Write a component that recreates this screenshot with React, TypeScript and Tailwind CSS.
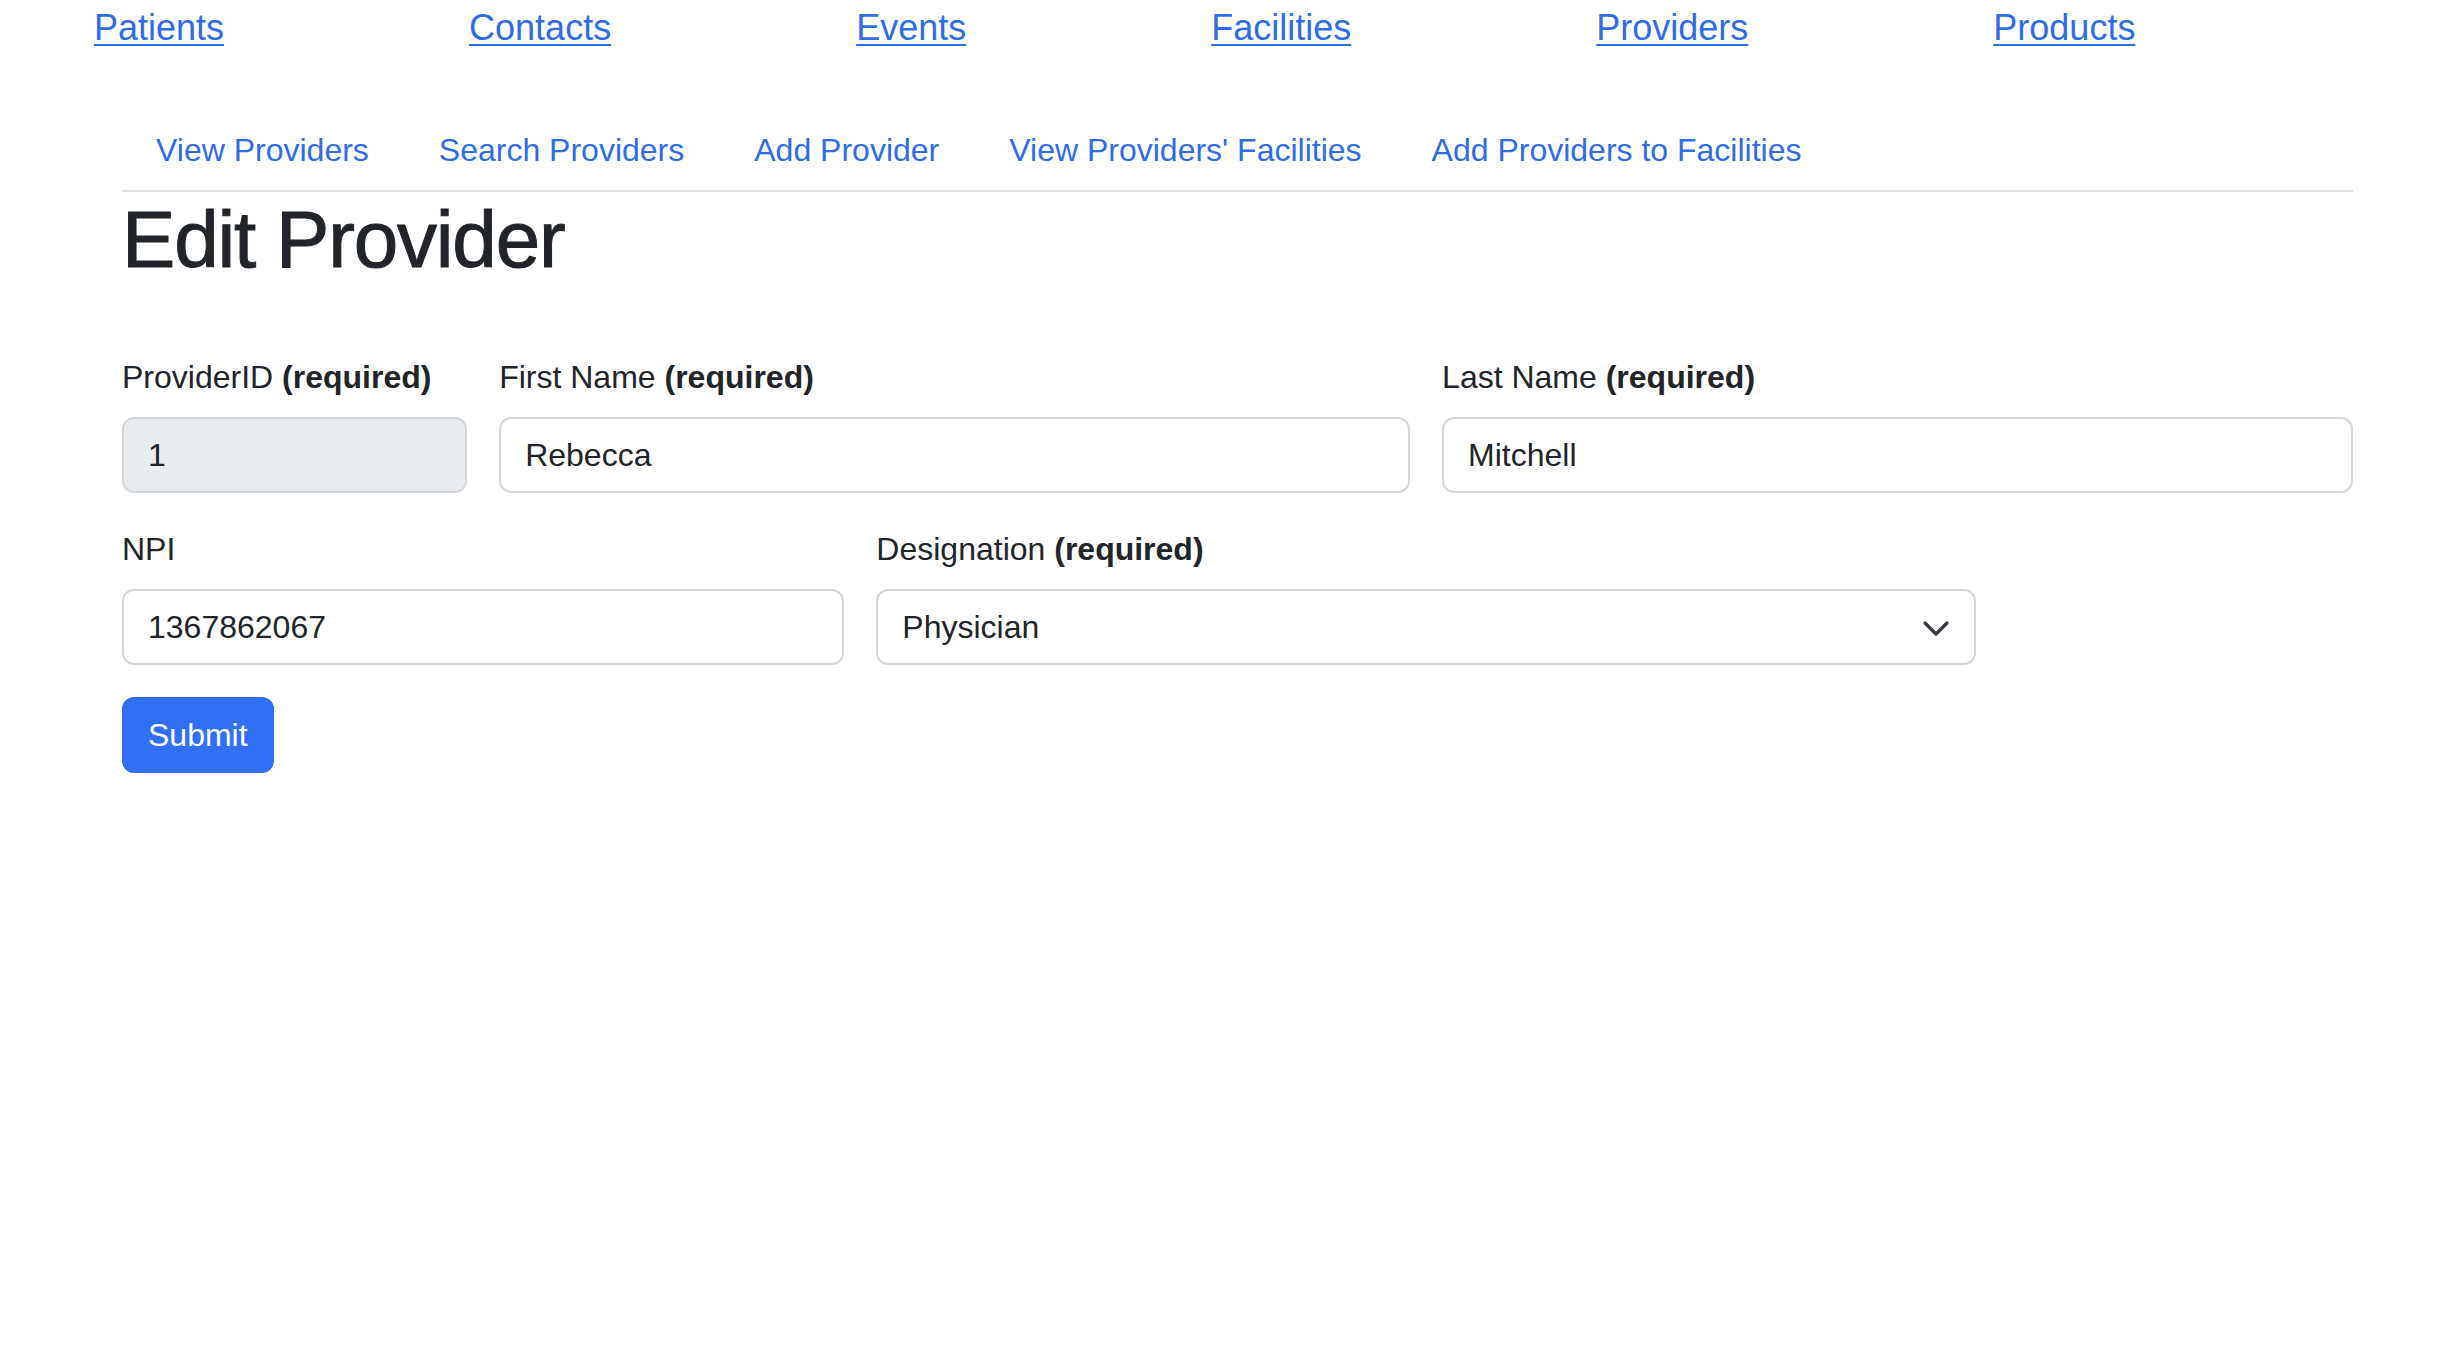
import React from "react";

const topLinks = ["Patients", "Contacts", "Events", "Facilities", "Providers", "Products"];
const subLinks = [
  "View Providers",
  "Search Providers",
  "Add Provider",
  "View Providers' Facilities",
  "Add Providers to Facilities",
];

function Label({ text, required }: { text: string; required?: boolean }) {
  return (
    <label className="block text-[32px] leading-[48px] mb-[16px] text-[#212529] whitespace-nowrap">
      {text}
      {required ? <b className="font-bold"> (required)</b> : null}
    </label>
  );
}

function TextInput({ value, disabled }: { value: string; disabled?: boolean }) {
  return (
    <input
      readOnly
      value={value}
      disabled={disabled}
      className={
        "block w-full h-[76px] border-2 border-[#d3d7dc] rounded-[12px] px-[24px] text-[32px] text-[#212529] outline-none " +
        (disabled ? "bg-[#e9ecef]" : "bg-white")
      }
      style={{ fontFamily: "inherit" }}
    />
  );
}

export default function App() {
  return (
    <div
      className="min-h-[1352px] bg-white text-[#212529]"
      style={{ fontFamily: '"Liberation Sans", Arial, sans-serif' }}
    >
      <ul className="flex gap-[245px] pl-[94px] pt-[4px] m-0 list-none">
        {topLinks.map((l) => (
          <li key={l}>
            <a
              href="#"
              className="text-[36px] leading-[48px] text-[#2f6ce8] underline underline-offset-[4px] decoration-[2px]"
            >
              {l}
            </a>
          </li>
        ))}
      </ul>

      <div className="ml-[122px] w-[2231px] mt-[58px]">
        <nav className="flex gap-[2px] border-b-2 border-[#dee2e6]">
          {subLinks.map((l) => (
            <a
              key={l}
              href="#"
              className="px-[34px] py-[16px] text-[32px] leading-[48px] text-[#2f6ce8] whitespace-nowrap"
            >
              {l}
            </a>
          ))}
        </nav>

        <h1 className="text-[80px] leading-[96px] font-medium tracking-[-1.2px] mb-[65px] text-[#212529] [-webkit-text-stroke:1px_#212529]">
          Edit Provider
        </h1>

        <form className="grid grid-cols-12 gap-x-[32px] gap-y-[32px]">
          <div className="col-span-2">
            <Label text="ProviderID" required />
            <TextInput value="1" disabled />
          </div>
          <div className="col-span-5">
            <Label text="First Name" required />
            <TextInput value="Rebecca" />
          </div>
          <div className="col-span-5">
            <Label text="Last Name" required />
            <TextInput value="Mitchell" />
          </div>
          <div className="col-span-4">
            <Label text="NPI" />
            <TextInput value="1367862067" />
          </div>
          <div className="col-span-6">
            <Label text="Designation" required />
            <div className="relative">
              <select
                className="block w-full h-[76px] appearance-none border-2 border-[#d3d7dc] rounded-[12px] pl-[24px] pr-[80px] text-[32px] text-[#212529] bg-white outline-none"
                style={{ fontFamily: "inherit" }}
                defaultValue="Physician"
              >
                <option>Physician</option>
                <option>Nurse Practitioner</option>
                <option>Physician Assistant</option>
              </select>
              <svg
                className="absolute right-[24px] top-1/2 -translate-y-1/2 pointer-events-none"
                width="32"
                height="24"
                viewBox="0 0 16 12"
                fill="none"
              >
                <path
                  d="M2.5 4l5.5 5.5 5.5-5.5"
                  stroke="#343a40"
                  strokeWidth="1.6"
                  strokeLinecap="round"
                  strokeLinejoin="round"
                />
              </svg>
            </div>
          </div>
          <div className="col-span-12">
            <button
              type="button"
              className="h-[76px] px-[24px] border-2 border-[#316ff6] bg-[#316ff6] text-white text-[32px] leading-[48px] rounded-[12px]"
              style={{ fontFamily: "inherit" }}
            >
              Submit
            </button>
          </div>
        </form>
      </div>
    </div>
  );
}
